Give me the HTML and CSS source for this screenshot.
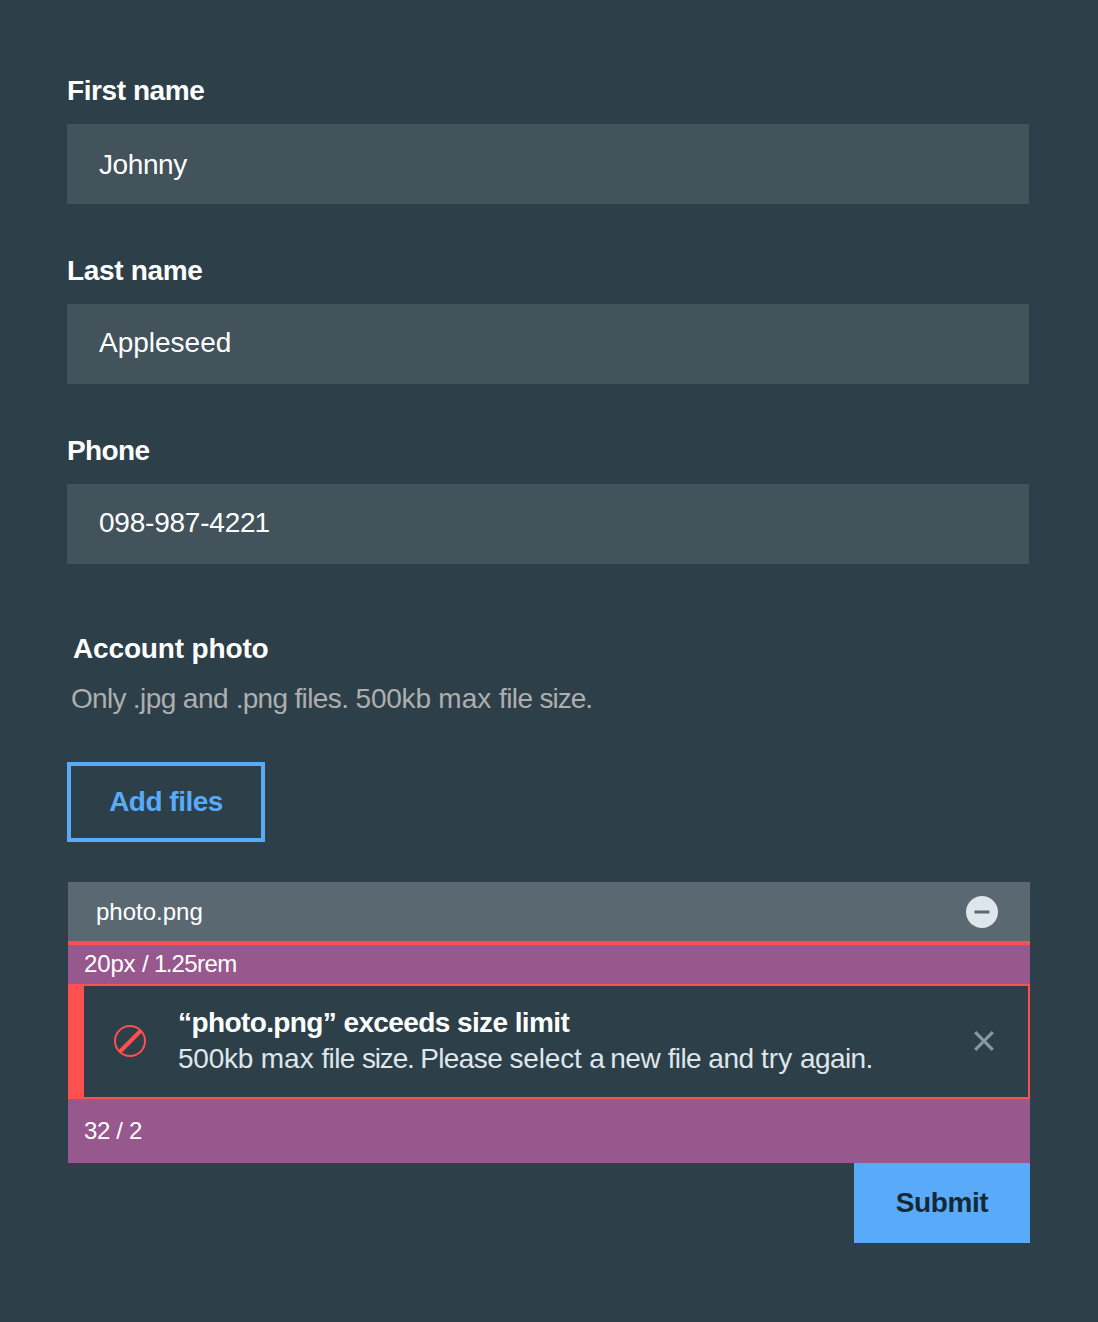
FILE: index.html
```html
<!DOCTYPE html>
<html lang="en">
<head>
<meta charset="utf-8">
<title>Account form</title>
<link rel="stylesheet" href="styles.css">
</head>
<body>
<main class="form">
  <div class="field">
    <div class="label"><span class="k4">First name</span></div>
    <div class="input input-first"><span class="k4">Johnny</span></div>
  </div>
  <div class="field">
    <div class="label"><span class="k3">Last name</span></div>
    <div class="input">Appleseed</div>
  </div>
  <div class="field">
    <div class="label"><span class="k6">Phone</span></div>
    <div class="input"><span class="k2">098-987-422</span><span class="one">1</span></div>
  </div>
  <section class="upload">
    <div class="upload-title"><span class="k1">Account photo</span></div>
    <div class="upload-hint"><span class="k7">Only </span><span class="k6">.jpg </span><span class="k4">and </span><span class="k7">.png </span><span class="k6">files. </span><span class="k2">500kb </span>max <span class="k6">file </span><span class="k10">size.</span></div>
    <div class="add"><span class="k5">Add files</span></div>
  </section>
  <section class="files">
    <div class="file">
      <span>photo.png</span>
      <svg class="remove" width="32" height="32" viewBox="0 0 32 32"><circle cx="16" cy="16" r="16" fill="#dfe6eb"/><path d="M8.5 16h15" stroke="#5a6872" stroke-width="3"/></svg>
    </div>
    <div class="space space-top"><span class="k1">20px / </span><span class="one-wide">1</span><span class="k10">.</span><span class="k6">25rem</span></div>
    <div class="alert">
      <svg class="stop" width="32" height="32" viewBox="0 0 32 32" fill="none" stroke="#ff5050"><circle cx="16" cy="16" r="15" stroke-width="2"/><path d="M6 26.5L26.5 6" stroke-width="4"/></svg>
      <div class="message">
        <div class="alert-title"><span class="k6">“photo.png” exceeds size limit</span></div>
        <div class="alert-text"><span class="k2">500kb </span>max <span class="k6">file </span><span class="k12">size. </span><span class="k6">Please </span><span class="k1">select </span><span class="k12">a </span><span class="k4">new </span><span class="k6">file </span><span class="k4">and </span>try <span class="k6">again.</span></div>
      </div>
      <svg class="close" width="20" height="20" viewBox="0 0 20 20"><path d="M1.2 1.2L18.8 18.8M18.8 1.2L1.2 18.8" stroke="#8897a2" stroke-width="3.2"/></svg>
    </div>
    <div class="space space-bottom"><span class="k3">32 / 2</span></div>
    <div class="submit"><span class="k4">Submit</span></div>
  </section>
</main>
</body>
</html>
```
FILE: styles.css
```css
* { box-sizing: border-box; }
body {
  margin: 0;
  min-height: 1322px;
  background: #2d3f49;
  color: #fff;
  font: 28px/40px "Liberation Sans", Arial, sans-serif;
}

/* tracking, in tenths of a pixel */
.k1 { letter-spacing: -.15px; }
.k2 { letter-spacing: -.22px; }
.k3 { letter-spacing: -.33px; }
.k4 { letter-spacing: -.42px; }
.k5 { letter-spacing: -.5px; }
.k6 { letter-spacing: -.6px; }
.k7 { letter-spacing: -.7px; }
.k10 { letter-spacing: -1px; }
.k12 { letter-spacing: -1.2px; }
.one { margin-left: -1px; }
.one-wide { margin-left: -1px; letter-spacing: -1.5px; }

.form { padding: 71px 68px 0 67px; white-space: nowrap; }
.field { width: 962px; margin-bottom: 47px; }
.label, .upload-title { font-weight: 700; }
.label { margin-bottom: 13px; }
.input { height: 80px; padding: 19px 32px; background: #42535b; }
.input-first { padding-top: 21px; }
.upload { padding-top: 18px; }
.upload-title { padding-left: 6px; }
.upload-hint { padding: 10px 0 0 4px; color: #aeaeae; }
.add {
  width: 198px;
  height: 80px;
  margin-top: 43px;
  padding-top: 16px;
  border: 4px solid #5aaafa;
  color: #5aaafa;
  font-weight: 700;
  text-align: center;
}
.files {
  display: flex;
  flex-direction: column;
  width: 962px;
  margin: 40px 0 0 1px;
  font-size: 24px;
}
.file {
  display: flex;
  align-items: center;
  justify-content: space-between;
  height: 63px;
  padding: 0 32px 0 28px;
  background: #5a6872;
  border-bottom: 4px solid #ff5050;
}
.space { padding-left: 16px; background: #97588e; white-space: pre; }
.space-top { height: 39px; line-height: 37px; }
.space-bottom { height: 64px; line-height: 64px; }
.alert {
  display: flex;
  align-items: center;
  height: 115px;
  padding: 0 34px 1px 30px;
  border: 2px solid #ff5050;
  border-left-width: 16px;
  font-size: 28px;
  line-height: 36px;
}
.message { flex: 1; padding-left: 32px; }
.alert-title { font-weight: 700; }
.alert-text { color: #dfe6eb; }
.submit {
  align-self: flex-end;
  width: 176px;
  height: 80px;
  background: #5aaafa;
  color: #152935;
  font-size: 28px;
  font-weight: 700;
  line-height: 80px;
  text-align: center;
}
```
